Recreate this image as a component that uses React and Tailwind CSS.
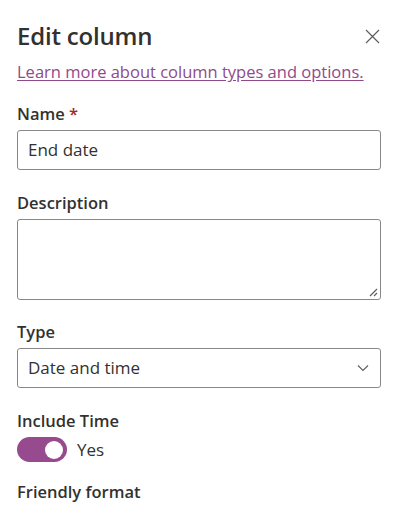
import React from "react";

export default function App() {
  return (
    <div className="w-[401px] h-[510px] bg-white overflow-hidden text-[#323130]" style={{ fontFamily: '"Open Sans", "Noto Sans", sans-serif' }}>
      <div className="pl-[17px] pr-[20px] pt-[18px]">
        <div className="flex items-center justify-between h-[36px]">
          <h1 className="text-[24px] font-semibold leading-[36px] tracking-[-0.2px]">Edit column</h1>
          <button className="w-[16px] h-[16px] flex items-center justify-center mr-[1px]">
            <svg width="15" height="15" viewBox="0 0 15 15" fill="none" stroke="#605e5c" strokeWidth="1.2">
              <path d="M1 1 L14 14 M14 1 L1 14" />
            </svg>
          </button>
        </div>
        <a className="block mt-[6px] text-[16.5px] leading-[24px] text-[#8f4a8c] underline underline-offset-[2px]">
          Learn more about column types and options.
        </a>

        <div className="mt-[18px]">
          <div className="text-[16.5px] font-semibold leading-[24px]">
            Name <span className="text-[#a4262c]">*</span>
          </div>
          <div className="mt-[4px] h-[40px] border border-[#8a8886] rounded-[3px] flex items-center px-[10px] text-[17px]">
            End date
          </div>
        </div>

        <div className="mt-[21px]">
          <div className="text-[16.5px] font-semibold leading-[24px]">Description</div>
          <div className="mt-[4px] h-[81px] border border-[#8a8886] rounded-[3px] relative">
            <svg className="absolute right-[2px] bottom-[2px]" width="9" height="9" viewBox="0 0 9 9" stroke="#605e5c" strokeWidth="1.2">
              <path d="M8 1 L1 8 M8 5 L5 8" />
            </svg>
          </div>
        </div>

        <div className="mt-[20px]">
          <div className="text-[16.5px] font-semibold leading-[24px]">Type</div>
          <div className="mt-[4px] h-[40px] border border-[#8a8886] rounded-[3px] flex items-center justify-between pl-[10px] pr-[11px] text-[17px]">
            <span>Date and time</span>
            <svg width="12" height="8" viewBox="0 0 12 8" fill="none" stroke="#605e5c" strokeWidth="1.1">
              <path d="M1 1.5 L6 6.5 L11 1.5" />
            </svg>
          </div>
        </div>

        <div className="mt-[21px]">
          <div className="text-[16.5px] font-semibold leading-[24px]">Include Time</div>
          <div className="mt-[4px] flex items-center">
            <div className="w-[50px] h-[25px] rounded-full bg-[#974a8e] relative">
              <div className="absolute right-[4px] top-[3.5px] w-[18px] h-[18px] rounded-full bg-white" />
            </div>
            <span className="ml-[10px] text-[17px] leading-[24px]">Yes</span>
          </div>
        </div>

        <div className="mt-[18px]">
          <div className="text-[16.5px] font-semibold leading-[24px]">Friendly format</div>
        </div>
      </div>
    </div>
  );
}
